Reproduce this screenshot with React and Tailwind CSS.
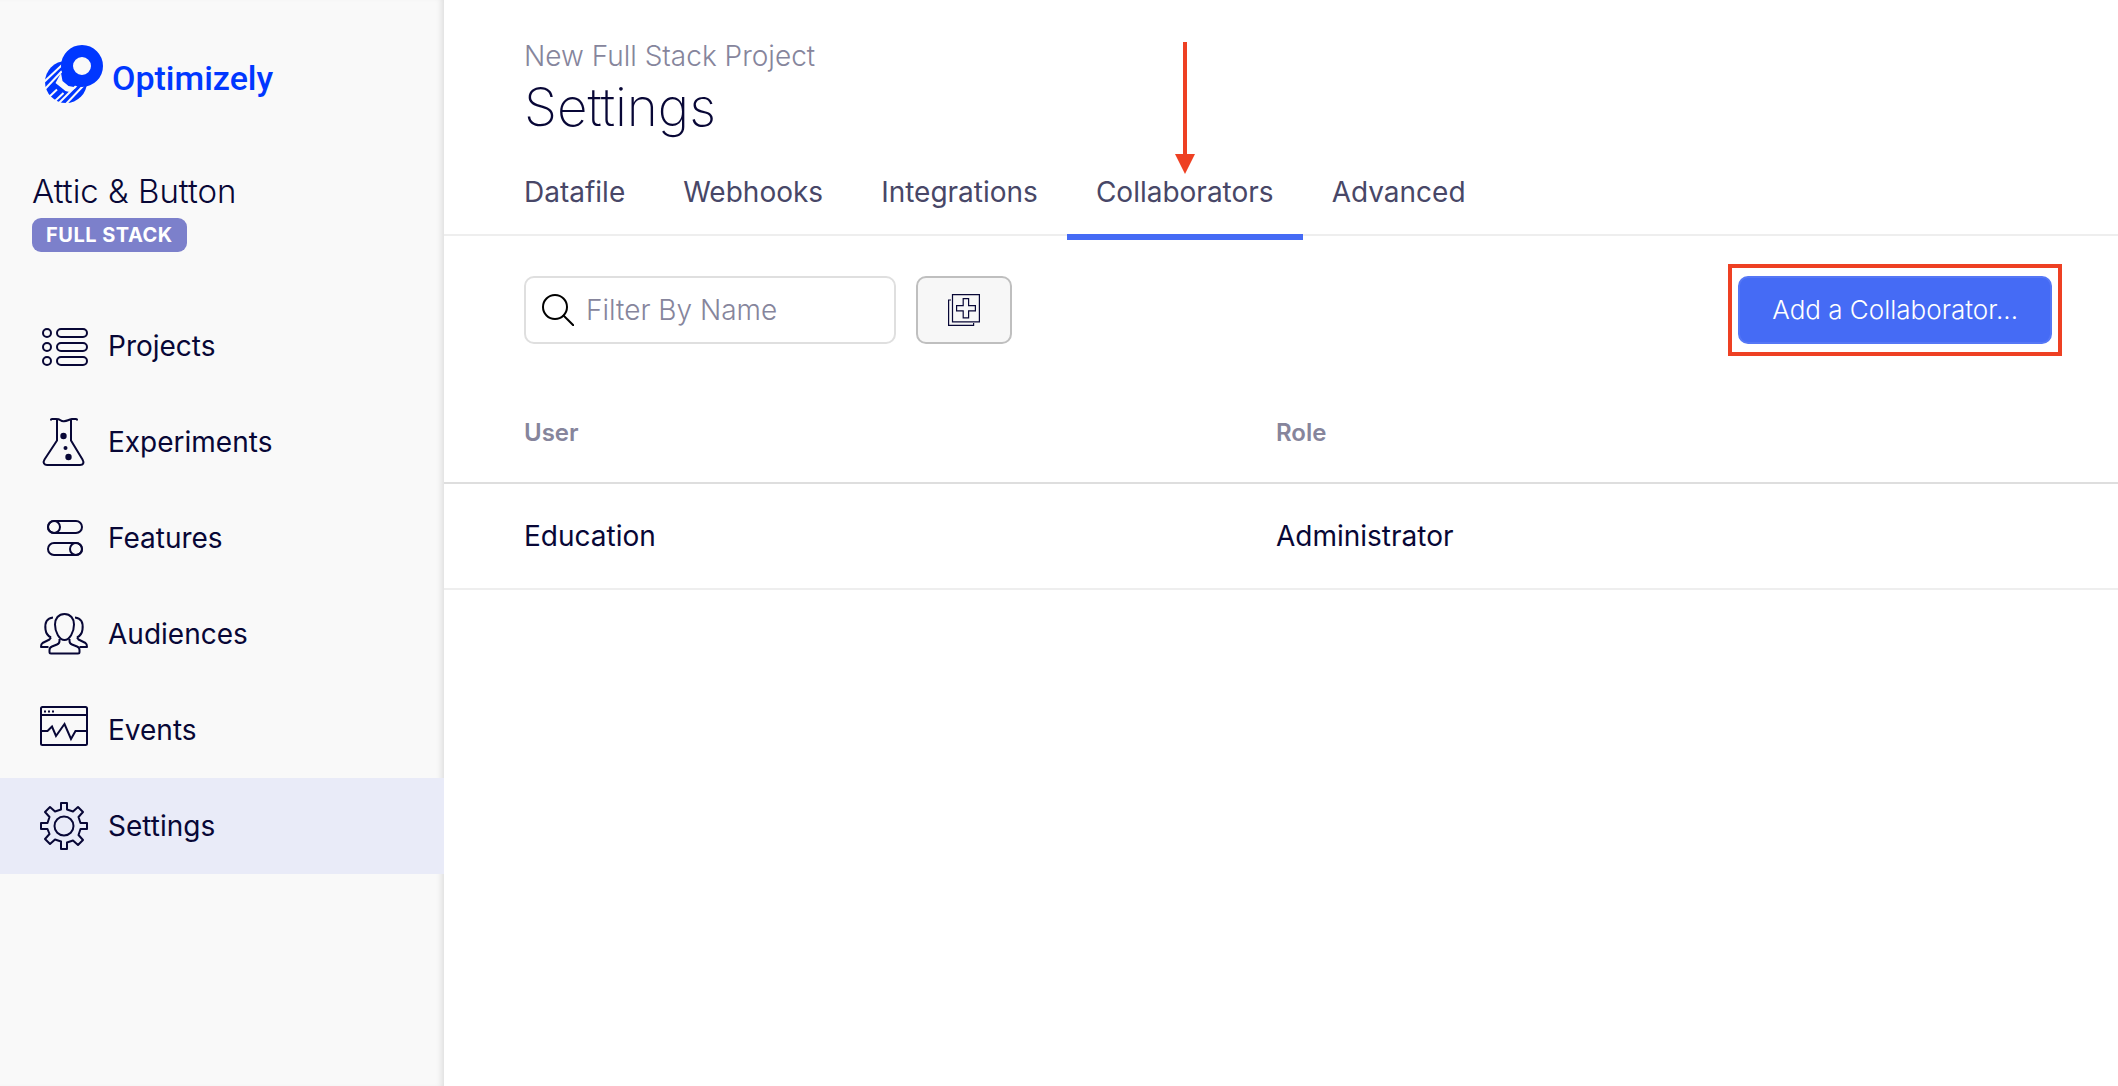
import React from "react";

const INK = "#080736";

const ProjectsIcon = () => (
  <svg viewBox="0 0 48 48" className="size-12" fill="none" stroke={INK} strokeWidth="2" aria-hidden="true">
    {[7, 21, 35].map((y) => (
      <g key={y}>
        <rect x="3" y={y} width="8" height="8" rx="4" />
        <rect x="17" y={y} width="30" height="8" rx="4" />
      </g>
    ))}
  </svg>
);

const ExperimentsIcon = () => (
  <svg viewBox="0 0 48 48" className="size-12" fill="none" stroke={INK} strokeWidth="2" strokeLinejoin="round" aria-hidden="true">
    <path d="M11 2.5V1.5q0-.5 1-.5h4q3 0 4.500 1.200t3.500 1 4-1T32 1h4q1 0 1 .5v1" />
    <path d="M17 1v21.500L4.500 41.500q-1.500 2.500-.5 4t3 1.500h33q2.500 0 3.200-1.500t-.7-4L31 22.500V1" />
    <g fill={INK} stroke="none">
      <circle cx="23.500" cy="18" r="3.200" />
      <circle cx="25.500" cy="30" r="2" />
      <circle cx="28.500" cy="39" r="3.200" />
    </g>
  </svg>
);

const FeaturesIcon = () => (
  <svg viewBox="0 0 48 48" className="size-12" fill="none" stroke={INK} strokeWidth="2" aria-hidden="true">
    <rect x="8" y="7" width="34" height="12" rx="6" />
    <circle cx="14" cy="13" r="6" />
    <rect x="8" y="29" width="34" height="12" rx="6" />
    <circle cx="36" cy="35" r="6" />
  </svg>
);

const AudiencesIcon = () => (
  <svg viewBox="0 1 48 48" className="size-12" fill="none" stroke={INK} strokeWidth="2" strokeLinejoin="round" aria-hidden="true">
    <path d="M24.500 5C18.500 5 15 9.500 15 15.500c0 8 4.500 15.500 9.500 15.500S34 23.500 34 15.500C34 9.500 30.500 5 24.500 5Z" />
    <path d="M19.500 30v2q0 2.500-2.500 3.500l-5 2q-2.500 1-2.500 3.500v2q0 1.500 1.500 1.500h27q1.500 0 1.500-1.500v-2q0-2.500-2.500-3.500l-5-2q-2.500-1-2.500-3.500v-2" />
    <path d="M13 8.500c-6 .5-8.500 5-7.500 12 .5 4 2.500 6.500 5.500 8M11 28.500l-1.500 2-7 3.500Q1 35 1 38h7.500" />
    <path d="M35 8.500c6 .5 8.500 5 7.500 12-.5 4-2.500 6.500-5.500 8M37 28.500l1.500 2 7 3.500q1.500 1 1.500 4h-7.500" />
  </svg>
);

const EventsIcon = () => (
  <svg viewBox="0 4 48 48" className="size-12" fill="none" stroke={INK} strokeWidth="2" aria-hidden="true">
    <rect x="1" y="5" width="46" height="38" rx="1.500" />
    <path d="M1 13h46" />
    <path d="M1 29h6.500l4.500-4.500L16 34l8.500-12L31 37l4.500-8H47" />
    <path d="M4 9.500h2M8 9.500h2M12 9.500h2" />
  </svg>
);

const SettingsIcon = () => (
  <svg viewBox="0 0 48 48" className="size-12" fill="none" stroke={INK} strokeWidth="2" strokeLinejoin="round" aria-hidden="true">
    <path d="M21 1h6v6.500l6 2 5-4.500 5 5-4.500 5 2 6H47v6h-6.500l-2 6 4.500 5-5 5-5-4.500-6 2V47h-6v-7.500l-6-2-5 4.500-5-5 4.500-5-2-5H1v-6h6.500l2-6-4.500-5 5-5 5 4.500 6-2Z" />
    <circle cx="24" cy="24" r="9.500" />
  </svg>
);

const navItems = [
  { label: "Projects", icon: <ProjectsIcon /> },
  { label: "Experiments", icon: <ExperimentsIcon /> },
  { label: "Features", icon: <FeaturesIcon /> },
  { label: "Audiences", icon: <AudiencesIcon /> },
  { label: "Events", icon: <EventsIcon /> },
  { label: "Settings", icon: <SettingsIcon />, active: true },
];

const tabs = ["Datafile", "Webhooks", "Integrations", "Collaborators", "Advanced"];

const collaborators = [{ user: "Education", role: "Administrator" }];

const Logo = () => (
  <a href="#home" className="flex items-center gap-2 px-11 text-[#0037ff]">
    <svg viewBox="-1 -1 60 60" className="size-[60px]" aria-hidden="true">
      <circle cx="21" cy="37" r="21" fill="currentColor" />
      <path
        d="M17 20 -1 37M17 26 0 44M12 44.500 3 53M18.500 48 9 57M32 40 13 59M39 40 21 59"
        stroke="#f9f9f9"
        strokeWidth="2"
      />
      <path d="m16 28 1.500 8 6 5 8 1.500-6.500 4q-4 1-7-2.500l-7.500-6Z" fill="#f9f9f9" />
      <circle cx="37" cy="21" r="15" fill="#f9f9f9" stroke="currentColor" strokeWidth="12" />
    </svg>
    <span className="pt-2 font-['Roboto',sans-serif] text-[34px] leading-10 font-medium">Optimizely</span>
  </a>
);

const Sidebar = () => (
  <aside className="w-[444px] shrink-0 bg-[#f9f9f9] pt-11 shadow-[inset_-6px_0_6px_-4px_rgba(0,0,0,0.12)]">
    <Logo />
    <div className="px-8 pt-16">
      <p className="text-[33px] leading-[46px] font-light">Attic &amp; Button</p>
      <p className="mt-1 w-fit rounded-[9px] bg-[#7c80cb] px-3.5 text-xl leading-[34px] font-bold tracking-wide text-white">
        FULL STACK
      </p>
    </div>
    <nav className="mt-[46px]">
      {navItems.map((item) => (
        <a
          key={item.label}
          href={`#${item.label.toLowerCase()}`}
          aria-current={item.active ? "page" : undefined}
          className={`flex h-24 items-center gap-5 px-10 ${item.active ? "bg-[#e9ebf8]" : ""}`}
        >
          {item.icon}
          {item.label}
        </a>
      ))}
    </nav>
  </aside>
);

const Tabs = () => (
  <nav className="flex border-b-2 border-[#eeeeee] px-[51px] text-[#484767]">
    {tabs.map((tab) => (
      <a
        key={tab}
        href={`#${tab.toLowerCase()}`}
        className={`relative px-[29px] pt-[34px] pb-6 leading-9 ${
          tab === "Collaborators"
            ? "after:absolute after:inset-x-0 after:top-full after:h-1.5 after:bg-[#456bf5]"
            : ""
        }`}
      >
        {tab}
        {tab === "Collaborators" && (
          <svg
            viewBox="0 0 20 132"
            className="absolute bottom-15 left-1/2 h-[132px] w-5 -translate-x-1/2"
            fill="#ee4023"
            aria-hidden="true"
          >
            <path d="M8 0h4v112h8l-10 20L0 112h8Z" />
          </svg>
        )}
      </a>
    ))}
  </nav>
);

const Toolbar = () => (
  <div className="flex items-center gap-5 pt-10 pr-[66px] pl-20">
    <label className="flex h-[68px] w-[372px] items-center gap-3 rounded-[10px] border-2 border-[#dfdfdf] px-4">
      <svg viewBox="0 0 32 32" className="size-8 shrink-0" fill="none" stroke="#000" strokeWidth="2" aria-hidden="true">
        <circle cx="13" cy="13" r="12" />
        <path d="m21 21 11 11" />
      </svg>
      <input
        type="text"
        aria-label="Filter By Name"
        placeholder="Filter By Name"
        className="w-full min-w-0 font-light outline-none placeholder:text-[#86859c]"
      />
    </label>
    <button
      type="button"
      aria-label="Add group"
      className="flex h-[68px] w-24 items-center justify-center rounded-[10px] border-2 border-[#bfbfbf] bg-[#f7f7f7]"
    >
      <svg viewBox="0 0 32 32" className="size-8" fill="none" stroke={INK} strokeWidth="1.200" aria-hidden="true">
        <path d="M4.500.6h26.900v27.200H4.500Z" />
        <path d="M3 6H.6v25.400h25V29" />
        <path d="M15.200 4.600h5.400v7h6.800v5.200h-6.800v7h-5.400v-7H8.600v-5.200h6.600Z" />
      </svg>
    </button>
    <div className="relative ml-auto">
      <button
        type="button"
        className="h-[68px] rounded-[10px] border-2 border-[#5577f6] bg-[#456bf5] px-8 text-[26px] font-light text-white"
      >
        Add a Collaborator...
      </button>
      <div className="pointer-events-none absolute -inset-x-2.5 -inset-y-3 border-4 border-[#ee4023]" />
    </div>
  </div>
);

const CollaboratorsTable = () => (
  <table className="mt-10 w-full table-fixed text-left">
    <thead>
      <tr className="h-[99px] border-b-2 border-[#dedede] text-2xl text-[#86859c]">
        <th className="w-[49.7%] pl-20 font-semibold">User</th>
        <th className="font-semibold">Role</th>
      </tr>
    </thead>
    <tbody>
      {collaborators.map((row) => (
        <tr key={row.user} className="h-[106px] border-b-2 border-[#eeeeee]">
          <td className="pl-20">{row.user}</td>
          <td>{row.role}</td>
        </tr>
      ))}
    </tbody>
  </table>
);

const App = () => {
  return (
    <div className="flex min-h-screen bg-white font-['Inter',sans-serif] text-[28px] leading-9 font-normal text-[#080736]">
      <Sidebar />
      <main className="min-w-0 flex-1">
        <header className="px-20 pt-[38px]">
          <p className="font-light text-[#86859c]">New Full Stack Project</p>
          <h1 className="text-[53px] leading-[66px] font-extralight">Settings</h1>
        </header>
        <Tabs />
        <Toolbar />
        <CollaboratorsTable />
      </main>
    </div>
  );
};

export default App;
